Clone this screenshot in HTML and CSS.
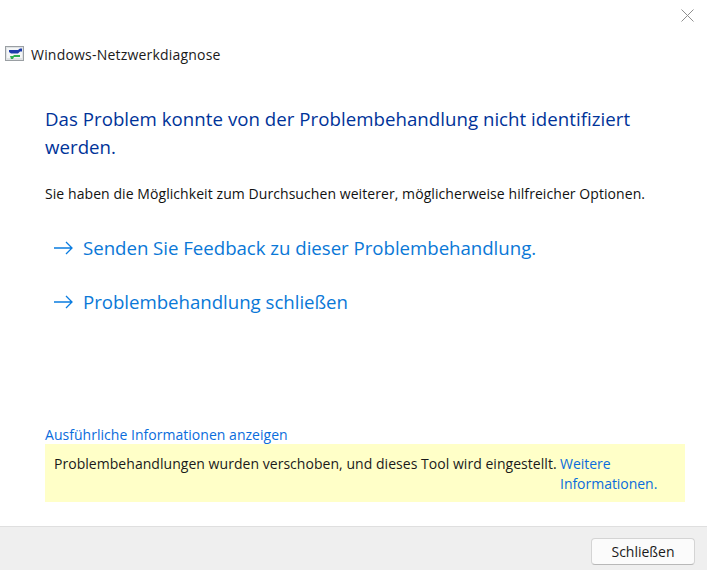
FILE: index.html
```html
<!DOCTYPE html>
<html lang="de">
<head>
<meta charset="utf-8">
<title>Windows-Netzwerkdiagnose</title>
<link rel="stylesheet" href="styles.css">
</head>
<body>
<div class="window">
  <button class="close" aria-label="Schließen">
    <svg width="13" height="13" viewBox="0 0 13 13"><path d="M.5.5l12 12M12.5.5l-12 12" stroke="#8e8e8e" stroke-width="1" fill="none"/></svg>
  </button>
  <header class="titlebar">
    <svg class="appicon" width="20" height="16" viewBox="0 0 20 16">
      <rect x="0.5" y="0.5" width="18" height="14" fill="#dfe2e4" stroke="#9a9fa3"/>
      <rect x="2" y="2" width="15" height="10" fill="#f4f6f7"/>
      <path d="M4 4h9l2-1.500h2v3h-2l-2 2H6L4 6z" fill="#1c3cab"/>
      <path d="M5 10h3l1-1h6v2H9l-1 2H6z" fill="#2eaf50"/>
    </svg>
    <span class="apptitle">Windows-Netzwerkdiagnose</span>
  </header>
  <main class="content">
    <h1 class="heading">Das Problem konnte von der Problembehandlung nicht identifiziert werden.</h1>
    <p class="desc">Sie haben die Möglichkeit zum Durchsuchen weiterer, möglicherweise hilfreicher Optionen.</p>
    <a class="cmd cmd-first" href="#">
      <svg class="arrow" width="19" height="14" viewBox="0 0 19 14"><path d="M0 7h18M12 1l6 6-6 6" stroke="#0a7ce0" stroke-width="1.3" fill="none"/></svg>
      <span>Senden Sie Feedback zu dieser Problembehandlung.</span>
    </a>
    <a class="cmd cmd-second" href="#">
      <svg class="arrow" width="19" height="14" viewBox="0 0 19 14"><path d="M0 7h18M12 1l6 6-6 6" stroke="#0a7ce0" stroke-width="1.3" fill="none"/></svg>
      <span>Problembehandlung schließen</span>
    </a>
    <div class="spacer"></div>
    <a class="details" href="#">Ausführliche Informationen anzeigen</a>
    <div class="notice">
      <span class="notice-text">Problembehandlungen wurden verschoben, und dieses Tool wird eingestellt.</span>
      <a class="notice-link" href="#">Weitere Informationen.</a>
    </div>
  </main>
  <footer class="footer">
    <button class="btn">Schließen</button>
  </footer>
</div>
</body>
</html>
```
FILE: styles.css
```css
* { box-sizing: border-box; }
html, body { margin: 0; height: 100%; }
body { background: #fff; font-family: "Open Sans", "Noto Sans", sans-serif; color: #1a1a1a; }
.window { position: relative; height: 570px; display: flex; flex-direction: column; overflow: hidden; }
.close { position: absolute; top: 9px; right: 13px; padding: 0; border: 0; background: none; line-height: 0; }
.titlebar { display: flex; align-items: center; gap: 6px; height: 26px; margin-top: 41px; padding-left: 5px; flex: none; }
.appicon { flex: none; }
.apptitle { font-size: 14px; letter-spacing: 0.2px; }
.content { flex: 1; display: flex; flex-direction: column; padding: 38px 22px 24px 45px; }
.heading { margin: 0; font-size: 18.67px; font-weight: 400; line-height: 28px; color: #003399; letter-spacing: 0.03px; }
.desc { margin: 23px 0 0; font-size: 14px; line-height: 20px; letter-spacing: 0.07px; color: #111; }
.cmd { display: flex; align-items: center; gap: 10px; padding-left: 9px; font-size: 18.67px; line-height: 26px; color: #0a78d7; text-decoration: none; letter-spacing: -0.03px; }
.cmd-first { margin-top: 31px; }
.cmd-second { margin-top: 28px; }
.arrow { flex: none; }
.spacer { flex: 1; }
.details { font-size: 14px; line-height: 18px; color: #0a6cdc; text-decoration: none; letter-spacing: 0.03px; }
.notice { display: flex; height: 58px; padding: 10px 9px; background: #ffffc8; font-size: 14px; line-height: 20px; letter-spacing: 0.04px; }
.notice-text { flex: none; width: 506px; white-space: nowrap; }
.notice-link { width: 116px; color: #0a6cdc; text-decoration: none; letter-spacing: -0.03px; }
.footer { flex: none; display: flex; justify-content: flex-end; align-items: flex-start; height: 44px; padding: 11px 12px 0 0; background: #efefef; border-top: 1px solid #dfdfdf; }
.btn { width: 104px; height: 27px; padding: 0; background: #fbfbfb; border: 1px solid #d4d4d4; border-bottom-color: #b8b8b8; border-radius: 4px; font: inherit; font-size: 14px; color: #1a1a1a; }
```
